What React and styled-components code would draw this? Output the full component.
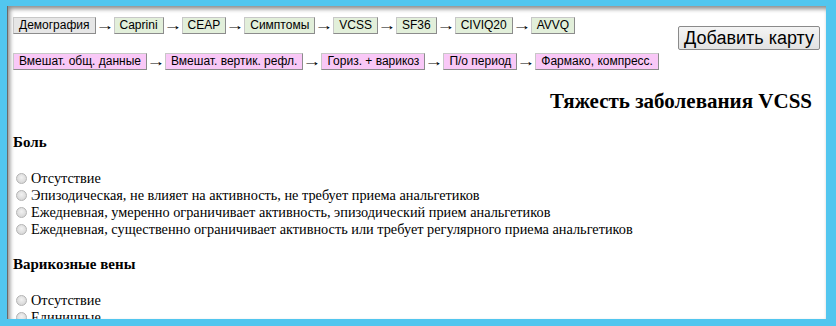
import styled, { createGlobalStyle } from "styled-components";

const Global = createGlobalStyle`
  html, body {
    margin: 0;
    padding: 0;
    height: 100%;
    background: #52c6ef;
    overflow: hidden;
  }
  #root {
    height: 100%;
  }
`;

const steps = ["Caprini", "CEAP", "Симптомы", "VCSS", "SF36", "CIVIQ20", "AVVQ"];
const surgery = [
  "Вмешат. общ. данные",
  "Вмешат. вертик. рефл.",
  "Гориз. + варикоз",
  "П/о период",
  "Фармако, компресс.",
];

const pain = [
  "Отсутствие",
  "Эпизодическая, не влияет на активность, не требует приема анальгетиков",
  "Ежедневная, умеренно ограничивает активность, эпизодический прием анальгетиков",
  "Ежедневная, существенно ограничивает активность или требует регулярного приема анальгетиков",
];

const veins = ["Отсутствие", "Единичные"];

export default function App() {
  return (
    <>
      <Global />
      <Frame>
        <Panel>
          <AddButton>Добавить карту</AddButton>
          <NavRow>
            <Step $kind="current">Демография</Step>
            {steps.map((s) => (
              <Link key={s}>
                <Arrow>→</Arrow>
                <Step $kind="green">{s}</Step>
              </Link>
            ))}
          </NavRow>
          <NavRow>
            {surgery.map((s, i) => (
              <Link key={s}>
                {i > 0 && <Arrow>→</Arrow>}
                <Step $kind="pink">{s}</Step>
              </Link>
            ))}
          </NavRow>
          <Title>Тяжесть заболевания VCSS</Title>
          <Section>
            <Heading>Боль</Heading>
            <Options>
              {pain.map((p) => (
                <Option key={p}>
                  <Radio type="radio" name="pain" />
                  {p}
                </Option>
              ))}
            </Options>
          </Section>
          <Section>
            <Heading>Варикозные вены</Heading>
            <Options>
              {veins.map((p) => (
                <Option key={p}>
                  <Radio type="radio" name="veins" />
                  {p}
                </Option>
              ))}
            </Options>
          </Section>
        </Panel>
      </Frame>
    </>
  );
}

const Frame = styled.div`
  height: 100%;
  box-sizing: border-box;
  padding: 6px 10px 7px 8px;
`;

const Panel = styled.div`
  height: 100%;
  background: #fff;
  box-shadow: inset 2px 3px 4px rgba(0, 0, 0, 0.45), -1px 0 0 #6a6a6a;
  overflow: hidden;
  padding: 11px 14px 0 5px;
  box-sizing: border-box;
  font-family: "Liberation Serif", "Times New Roman", serif;
  color: #000;
`;

const NavRow = styled.div`
  display: flex;
  align-items: center;
  height: 17px;
  margin-bottom: 19px;
`;

const Link = styled.span`
  display: flex;
  align-items: center;
`;

const Arrow = styled.span`
  display: inline-block;
  font-family: "Liberation Sans", Arial, sans-serif;
  font-size: 14px;
  width: 18px;
  text-align: center;
  line-height: 17px;
  transform: scaleX(1.35);
`;

const Step = styled.button`
  font-family: "Liberation Sans", Arial, sans-serif;
  font-size: 12px;
  height: 17px;
  padding: 0 5px;
  margin: 0;
  line-height: 15px;
  color: #000;
  border: 1px solid;
  border-color: #c8c8c8 #8c8c8c #8c8c8c #c8c8c8;
  border-radius: 0;
  background: ${(p) =>
    p.$kind === "pink" ? "#f9c8f7" : p.$kind === "green" ? "#e2efda" : "#e6e6e6"};
`;

const AddButton = styled.button`
  float: right;
  margin: 9px -8px 0 0;
  font-family: "Liberation Sans", Arial, sans-serif;
  font-size: 18px;
  height: 24px;
  padding: 0 5px;
  line-height: 20px;
  color: #000;
  background: linear-gradient(#f4f4f4, #e2e2e2);
  border: 1px solid #8a8a8a;
  border-radius: 2px;
`;

const Title = styled.h2`
  clear: both;
  text-align: right;
  font-size: 21px;
  font-weight: bold;
  margin: 0;
  line-height: 24px;
`;

const Section = styled.div`
  margin-top: 20px;

  & + & {
    margin-top: 17px;
  }
`;

const Heading = styled.h4`
  font-size: 15px;
  font-weight: bold;
  margin: 0 0 19px;
  line-height: 18px;
`;

const Options = styled.div`
  display: flex;
  flex-direction: column;
`;

const Option = styled.label`
  display: flex;
  align-items: center;
  font-size: 14.3px;
  line-height: 17px;
  height: 17px;
`;

const Radio = styled.input`
  appearance: none;
  width: 11px;
  height: 11px;
  margin: 0 4px 0 3px;
  border-radius: 50%;
  border: 1px solid #b4b4b4;
  background: radial-gradient(circle at 50% 40%, #f2f2f2, #cfcfcf);
  box-sizing: border-box;
`;
